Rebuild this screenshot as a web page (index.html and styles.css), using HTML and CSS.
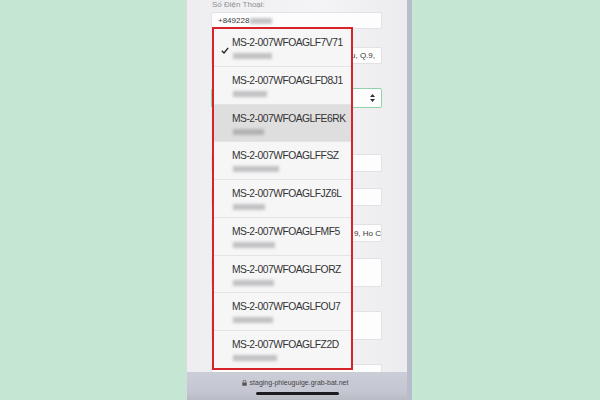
FILE: index.html
```html
<!DOCTYPE html>
<html lang="vi">
<head>
  <meta charset="UTF-8" />
  <meta name="viewport" content="width=device-width, initial-scale=1" />
  <title>Phiếu gửi</title>
  <link rel="stylesheet" href="styles.css">
</head>
<body>

  <div class="phone">
    <div class="screen">

      <div class="field">
        <label>Số Điện Thoại:</label>
        <div class="input">+849228<span class="blur-inline"></span></div>
      </div>
      <div class="field">
        <label></label>
        <div class="input right">u, Q.9,</div>
      </div>
      <div class="field loose">
        <label></label>
        <div class="input select">
          <span></span>
          <svg width="5" height="8" viewBox="0 0 5 8"><path d="M2.5 0 L5 3 L0 3 Z M0 5 L5 5 L2.5 8 Z" fill="#333"/></svg>
        </div>
      </div>
      <div class="field section">
        <label></label>
        <div class="input tall-18"></div>
      </div>
      <div class="field tight">
        <label></label>
        <div class="input tall-18"></div>
      </div>
      <div class="field">
        <label></label>
        <div class="input tall-18 right clip">9, Ho C</div>
      </div>
      <div class="field tight">
        <label></label>
        <div class="input area"></div>
      </div>
      <div class="field loose">
        <label></label>
        <div class="input area"></div>
      </div>
      <div class="field loose">
        <label></label>
        <div class="input area"></div>
      </div>

      <!-- danh sách chọn mở -->
      <ul class="picker">
        <li class="selected">
          <svg class="check" width="8" height="7" viewBox="0 0 8 7"><polyline points="0.8,3.8 3,6 7.2,0.8" fill="none" stroke="#222" stroke-width="1.3"/></svg>
          <span class="code">MS-2-007WFOAGLF7V71</span>
          <span class="phone-blur" style="width: 39px"></span>
        </li>
        <li>
          <span class="code">MS-2-007WFOAGLFD8J1</span>
          <span class="phone-blur" style="width: 34px"></span>
        </li>
        <li class="hover">
          <span class="code">MS-2-007WFOAGLFE6RK</span>
          <span class="phone-blur" style="width: 31px"></span>
        </li>
        <li>
          <span class="code">MS-2-007WFOAGLFFSZ</span>
          <span class="phone-blur" style="width: 46px"></span>
        </li>
        <li>
          <span class="code">MS-2-007WFOAGLFJZ6L</span>
          <span class="phone-blur" style="width: 32px"></span>
        </li>
        <li>
          <span class="code">MS-2-007WFOAGLFMF5</span>
          <span class="phone-blur" style="width: 42px"></span>
        </li>
        <li>
          <span class="code">MS-2-007WFOAGLFORZ</span>
          <span class="phone-blur" style="width: 41px"></span>
        </li>
        <li>
          <span class="code">MS-2-007WFOAGLFOU7</span>
          <span class="phone-blur" style="width: 40px"></span>
        </li>
        <li>
          <span class="code">MS-2-007WFOAGLFZ2D</span>
          <span class="phone-blur" style="width: 44px"></span>
        </li>
      </ul>
    </div>

    <div class="urlbar">
      <div class="url">
        <svg width="5" height="6" viewBox="0 0 5 6"><path d="M1 2.6 V1.8 A1.5 1.5 0 0 1 4 1.8 V2.6" fill="none" stroke="#555" stroke-width="0.8"/><rect x="0.3" y="2.6" width="4.4" height="3.2" rx="0.5" fill="#555"/></svg>
        staging-phieuguige.grab-bat.net
      </div>
      <div class="home"></div>
    </div>
  </div>

</body>
</html>
```

FILE: styles.css
```css
body {
  margin: 0;
  background-color: #c6e6d4;
  font-family: "Liberation Sans", Arial, sans-serif;
  height: 400px;
  overflow: hidden;
}
.phone {
  margin-left: 186px;
  width: 226px;
  height: 400px;
  display: flex;
  flex-direction: column;
  box-sizing: border-box;
  border-left: 1px solid #d9dadf;
  border-right: 5px solid #b8bdcc;
}
.screen {
  flex: 1;
  position: relative;
  overflow: hidden;
  background: linear-gradient(to right, #eeeef0, #f4f4f6 60%, #ececef);
  padding: 0 25px 0 24px;
}
.field {
  display: flex;
  flex-direction: column;
  margin-top: 6px;
}
.field:first-child {
  margin-top: 0;
}
.field.tight {
  margin-top: 4px;
}
.field.loose {
  margin-top: 12px;
}
.field.section {
  margin-top: 34px;
}
.field label {
  display: block;
  height: 12px;
  font-size: 8px;
  line-height: 10px;
  color: #8d8d92;
  padding-left: 1px;
}
.input {
  box-sizing: border-box;
  height: 17px;
  background-color: #fdfdfd;
  border: 1px solid #e2e2e6;
  border-radius: 2px;
  font-size: 8px;
  color: #3a3a3a;
  padding: 0 6px;
  display: flex;
  align-items: center;
  white-space: nowrap;
  overflow: hidden;
}
.input.right {
  justify-content: flex-end;
}
.input.clip {
  padding-right: 0;
}
.input.select {
  height: 20px;
  border: 1.5px solid #8fd3ab;
  justify-content: space-between;
  padding-right: 6px;
}
.input.tall-18 {
  height: 18px;
}
.input.area {
  height: 29px;
}
.blur-inline {
  display: inline-block;
  width: 22px;
  height: 6px;
  margin-left: 1px;
  background-color: #c4c4c8;
  filter: blur(1.5px);
}
.picker {
  position: absolute;
  left: 25px;
  top: 27px;
  width: 141px;
  height: 343px;
  box-sizing: border-box;
  margin: 0;
  padding: 0;
  list-style: none;
  border: 2px solid #d9232b;
  background-color: #f6f6f7;
  display: flex;
  flex-direction: column;
}
.picker li {
  flex: 1;
  position: relative;
  box-sizing: border-box;
  padding: 7px 4px 0 18px;
  border-bottom: 1px solid #e4e4e6;
}
.picker li:last-child {
  border-bottom: none;
}
.picker li.hover {
  background-color: #dededf;
}
.check {
  position: absolute;
  left: 7px;
  top: 18px;
}
.code {
  display: block;
  font-size: 10.3px;
  line-height: 14px;
  letter-spacing: -0.5px;
  color: #333;
  white-space: nowrap;
}
.phone-blur {
  display: block;
  height: 6px;
  margin-top: 3px;
  margin-left: 1px;
  background-color: #c2c2c5;
  filter: blur(1.8px);
}
.picker li.hover .phone-blur {
  background-color: #b2b2b4;
}
.urlbar {
  height: 28px;
  background: linear-gradient(#cbcdd7, #c4c6d1 70%, #b9bbc4);
  display: flex;
  flex-direction: column;
  align-items: center;
}
.url {
  margin-top: 6px;
  font-size: 7px;
  line-height: 9px;
  color: #444;
  display: flex;
  align-items: center;
  gap: 3px;
  padding-right: 4px;
}
.home {
  margin-top: 5px;
  width: 83px;
  height: 3px;
  border-radius: 2px;
  background-color: #1c1c1e;
}
```
